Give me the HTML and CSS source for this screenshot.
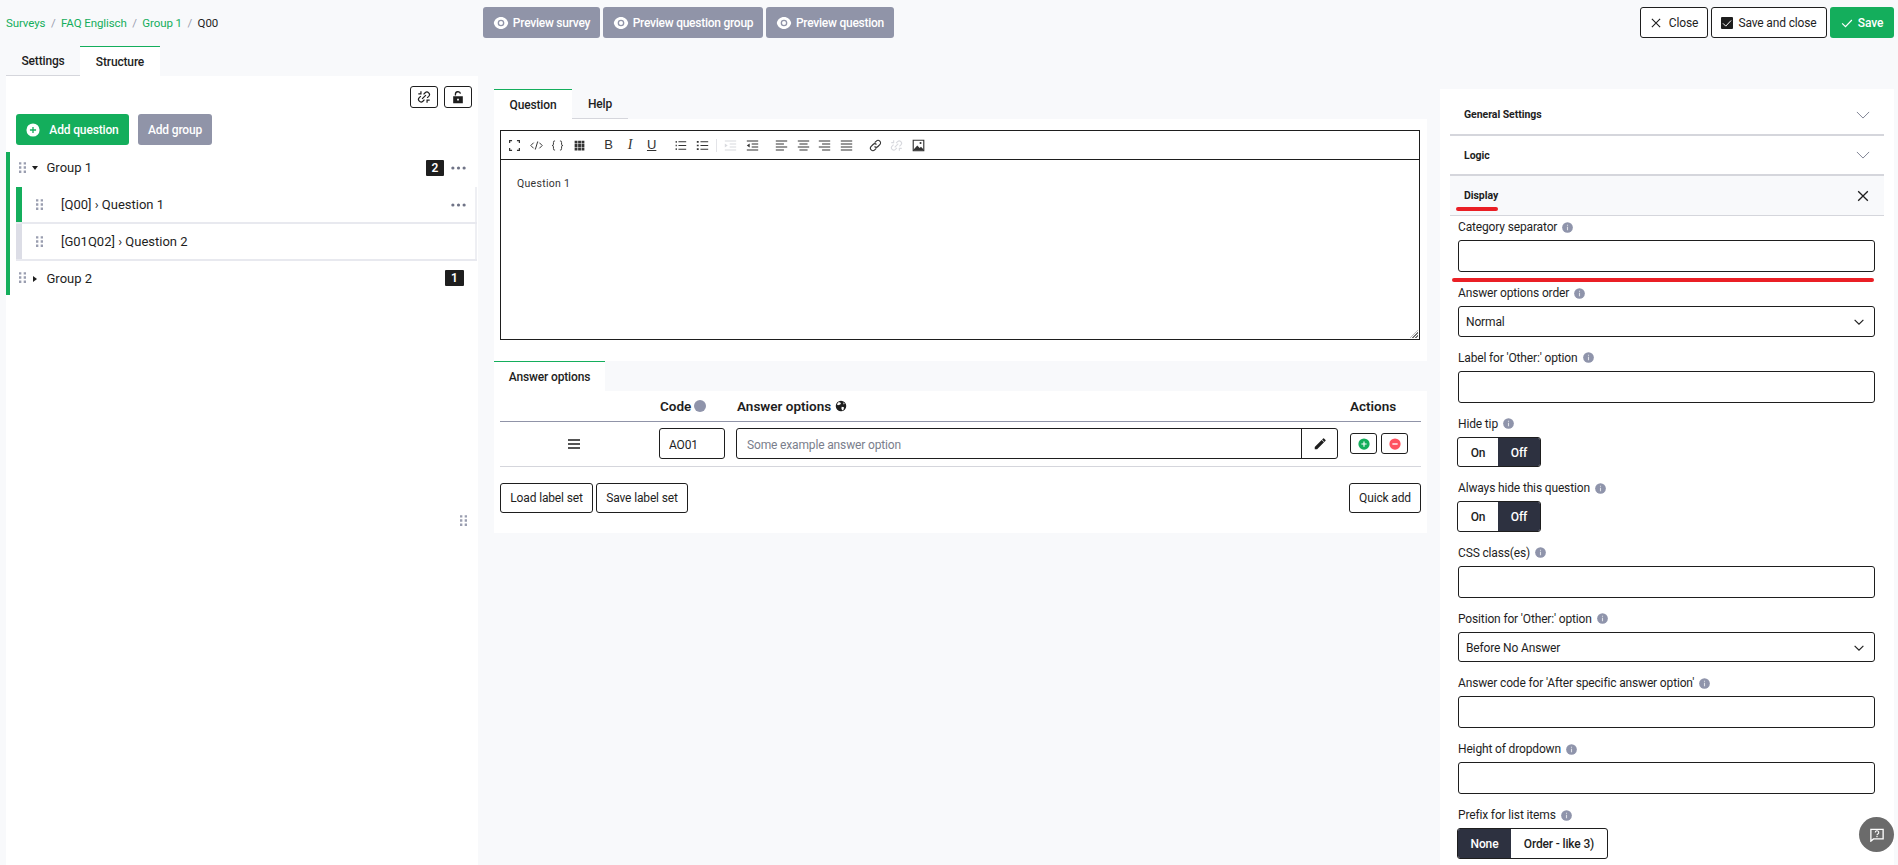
FILE: index.html
```html
<!DOCTYPE html>
<html lang="en">
<head>
<meta charset="utf-8">
<title>Q00</title>
<link rel="stylesheet" href="styles.css">
</head>
<body>
<svg class="defs" aria-hidden="true">
  <symbol id="eye" viewBox="0 0 24 24"><path fill="currentColor" fill-rule="evenodd" d="M1.2 12C2.1 6.9 6.6 3 12 3s9.9 3.9 10.8 9c-.9 5.100-5.400 9-10.800 9S2.100 17.100 1.200 12zM12 17a5 5 0 1 0 0-10 5 5 0 0 0 0 10zm0-2a3 3 0 1 1 0-6 3 3 0 0 1 0 6z"/></symbol>
  <symbol id="x" viewBox="0 0 16 16"><path d="M2.500 2.500l11 11M13.500 2.500l-11 11" fill="none" stroke="currentColor" stroke-width="1.500"/></symbol>
  <symbol id="check" viewBox="0 0 16 16"><path d="M1.500 8.500l4.500 4.500 8.500-9" fill="none" stroke="currentColor" stroke-width="1.600"/></symbol>
  <symbol id="chev" viewBox="0 0 16 16"><path d="M3 5.500l5 5 5-5" fill="none" stroke="currentColor" stroke-width="1.300"/></symbol>
  <symbol id="chev-thin" viewBox="0 0 16 16"><path d="M1 4.500l7 7 7-7" fill="none" stroke="currentColor" stroke-width="1"/></symbol>
  <symbol id="handle" viewBox="0 0 8 12"><path fill="currentColor" d="M0 0h2.500v2.500H0zM5 0h2.500v2.500H5zM0 4.500h2.500V7H0zM5 4.500h2.500V7H5zM0 9h2.500v2.500H0zM5 9h2.500v2.500H5z"/></symbol>
  <symbol id="more" viewBox="0 0 16 4"><circle cx="2" cy="2" r="1.700" fill="currentColor"/><circle cx="8" cy="2" r="1.700" fill="currentColor"/><circle cx="14" cy="2" r="1.700" fill="currentColor"/></symbol>
  <symbol id="plus-c" viewBox="0 0 16 16"><circle cx="8" cy="8" r="7.500" fill="currentColor"/><path d="M8 4.500v7M4.500 8h7" stroke="var(--hole)" stroke-width="1.500"/></symbol>
  <symbol id="minus-c" viewBox="0 0 16 16"><circle cx="8" cy="8" r="7.500" fill="currentColor"/><path d="M4.500 8h7" stroke="#fff" stroke-width="1.800"/></symbol>
  <symbol id="info" viewBox="0 0 16 16"><circle cx="8" cy="8" r="7.800" fill="#8f94ab"/><path d="M7.200 7h1.600v5H7.200zM7.200 4h1.600v1.600H7.200z" fill="#dfe1e8"/></symbol>
  <symbol id="unlink" viewBox="0 0 16 16"><path d="M7.500 5L9.300 3.200a2.900 2.900 0 0 1 4.100 4.100L11.600 9M8.500 11L6.700 12.800a2.900 2.900 0 0 1-4.100-4.100L4.400 7M5.800 10.200l4.400-4.400M1.500 4.500h3V1.500M14.500 11.500h-3v3" fill="none" stroke="currentColor" stroke-width="1.400"/></symbol>
  <symbol id="lock" viewBox="0 0 16 16"><path fill="currentColor" fill-rule="evenodd" d="M2.500 7h11v8h-11zM7 10v2h2v-2zM4.300 6.200V5a3.700 3.700 0 0 1 7.300-1l-1.500.4A2.200 2.200 0 0 0 5.800 5v1.200z"/></symbol>
  <symbol id="full" viewBox="0 0 16 16"><path d="M2 5V2h3M11 2h3v3M14 11v3h-3M5 14H2v-3" fill="none" stroke="currentColor" stroke-width="1.500"/></symbol>
  <symbol id="code" viewBox="0 0 16 16"><path d="M4.500 4.500L1 8l3.500 3.500M11.500 4.500L15 8l-3.500 3.500M9.500 3L6.500 13" fill="none" stroke="currentColor" stroke-width="1.200"/></symbol>
  <symbol id="braces" viewBox="0 0 16 16"><path d="M5 2.500H4C3 2.500 3 3.500 3 4.500V6.500C3 7.500 2.500 8 1.500 8C2.500 8 3 8.500 3 9.500V11.500C3 12.500 3 13.500 4 13.500H5M11 2.500H12C13 2.500 13 3.500 13 4.500V6.500C13 7.500 13.500 8 14.500 8C13.500 8 13 8.500 13 9.500V11.500C13 12.500 13 13.500 12 13.500H11" fill="none" stroke="currentColor" stroke-width="1.200"/></symbol>
  <symbol id="grid" viewBox="0 0 16 16"><path fill="currentColor" d="M2 2h3.500v3.500H2zM6.300 2h3.500v3.500H6.300zM10.500 2H14v3.500h-3.500zM2 6.300h3.500v3.500H2zM6.300 6.300h3.500v3.500H6.300zM10.500 6.300H14v3.500h-3.500zM2 10.500h3.500V14H2zM6.300 10.500h3.500V14H6.300zM10.500 10.500H14V14h-3.500z"/></symbol>
  <symbol id="ol" viewBox="0 0 16 16"><path d="M5.500 3.500h9.500M5.500 8h9.500M5.500 12.500h9.500" stroke="currentColor" stroke-width="1.300"/><path d="M2 2.500h1.500v2H2zM2 7h1.500v2H2zM2 11.500h1.500v2H2z" fill="currentColor"/></symbol>
  <symbol id="ul" viewBox="0 0 16 16"><path d="M5.500 3.500h9.500M5.500 8h9.500M5.500 12.500h9.500" stroke="currentColor" stroke-width="1.300"/><path d="M1 2.500h2.300v2H1zM1 7h2.300v2H1zM1 11.500h2.300v2H1z" fill="currentColor"/></symbol>
  <symbol id="ind" viewBox="0 0 16 16"><path d="M1 2.500h14M7 6.200h8M7 9.800h8M1 13.500h14" stroke="currentColor" stroke-width="1.300"/><path d="M1 5.500L4.500 8 1 10.500z" fill="currentColor"/></symbol>
  <symbol id="out" viewBox="0 0 16 16"><path d="M1 2.500h14M7 6.200h8M7 9.800h8M1 13.500h14" stroke="currentColor" stroke-width="1.300"/><path d="M4.500 5.500L1 8l3.500 2.500z" fill="currentColor"/></symbol>
  <symbol id="al" viewBox="0 0 16 16"><path d="M1 2.500h14M1 6.200h10M1 9.800h14M1 13.500h10" stroke="currentColor" stroke-width="1.300"/></symbol>
  <symbol id="ac" viewBox="0 0 16 16"><path d="M1 2.500h14M3 6.200h10M1 9.800h14M3 13.500h10" stroke="currentColor" stroke-width="1.300"/></symbol>
  <symbol id="ar" viewBox="0 0 16 16"><path d="M1 2.500h14M5 6.200h10M1 9.800h14M5 13.500h10" stroke="currentColor" stroke-width="1.300"/></symbol>
  <symbol id="aj" viewBox="0 0 16 16"><path d="M1 2.500h14M1 6.200h14M1 9.800h14M1 13.500h14" stroke="currentColor" stroke-width="1.300"/></symbol>
  <symbol id="link" viewBox="0 0 16 16"><path d="M7 4.500L9 2.600a3 3 0 0 1 4.300 4.300L11 9.200a3 3 0 0 1-4.200 0M9 11.500L7 13.400a3 3 0 0 1-4.300-4.300L5 6.800a3 3 0 0 1 4.200 0" fill="none" stroke="currentColor" stroke-width="1.400"/></symbol>
  <symbol id="img" viewBox="0 0 16 16"><path d="M1.500 1.500h13v13h-13z" fill="none" stroke="currentColor" stroke-width="1.400"/><path d="M2 13l4.500-5 3 3 1.500-1.500 3 3v1.500H2z" fill="currentColor"/><circle cx="10.500" cy="5" r="1.300" fill="currentColor"/></symbol>
  <symbol id="pencil" viewBox="0 0 16 16"><path fill="currentColor" d="M2 11.300V14h2.700l7.900-7.900-2.700-2.700zM14.300 4.400a.7.7 0 0 0 0-1l-1.700-1.700a.7.7 0 0 0-1 0l-1.200 1.200 2.700 2.700z"/></symbol>
  <symbol id="globe" viewBox="0 0 16 16"><circle cx="8" cy="8" r="7" fill="currentColor"/><path d="M5 2.500l3 1.500-1 2-3 1-1.500-1.500zM9 9l3 .5-.5 3-2 1.500-1-3zM11 3l2 2-1.500 1z" fill="#fff"/></symbol>
  <symbol id="help" viewBox="0 0 16 16"><path d="M1 1.500h14v11H4L1 15z" fill="none" stroke="currentColor" stroke-width="1.500"/><path d="M6 5.200a2 2 0 1 1 3 1.700c-.7.400-1 .7-1 1.400" fill="none" stroke="currentColor" stroke-width="1.300"/><path d="M7.300 9.200h1.400v1.400H7.300z" fill="currentColor"/></symbol>
</svg>

<header class="topbar">
  <nav class="crumbs">
    <a>Surveys</a><span class="sep">/</span><a>FAQ Englisch</a><span class="sep">/</span><a>Group 1</a><span class="sep">/</span><span>Q00</span>
  </nav>
  <div class="btn-row previews">
    <button class="btn grey"><svg class="i16"><use href="#eye"/></svg>Preview survey</button>
    <button class="btn grey"><svg class="i16"><use href="#eye"/></svg>Preview question group</button>
    <button class="btn grey"><svg class="i16"><use href="#eye"/></svg>Preview question</button>
  </div>
  <div class="btn-row actions">
    <button class="btn outline b-close"><svg class="i12"><use href="#x"/></svg>Close</button>
    <button class="btn outline b-saveclose"><span class="checkbox"><svg class="i10"><use href="#check"/></svg></span>Save and close</button>
    <button class="btn green b-save"><svg class="i12"><use href="#check"/></svg>Save</button>
  </div>
</header>

<main class="columns">
  <section class="col-left">
    <div class="tabs">
      <div class="tab tab-settings">Settings</div>
      <div class="tab active tab-structure">Structure</div>
    </div>
    <div class="tree-panel">
      <div class="tree-tools">
        <button class="tool"><svg class="i14"><use href="#unlink"/></svg></button>
        <button class="tool"><svg class="i14"><use href="#lock"/></svg></button>
      </div>
      <div class="add-row">
        <button class="btn green b-addq"><svg class="plus-ico"><use href="#plus-c"/></svg>Add question</button>
        <button class="btn grey b-addg">Add group</button>
      </div>
      <div class="tree">
        <div class="group first">
          <svg class="handle"><use href="#handle"/></svg>
          <span class="caret caret-down"></span>
          <span class="g-name">Group 1</span>
          <span class="badge">2</span>
          <svg class="more"><use href="#more"/></svg>
        </div>
        <div class="q current">
          <svg class="handle"><use href="#handle"/></svg>
          <span class="q-name">[Q00] › Question 1</span>
          <svg class="more"><use href="#more"/></svg>
        </div>
        <div class="q">
          <svg class="handle"><use href="#handle"/></svg>
          <span class="q-name">[G01Q02] › Question 2</span>
        </div>
        <div class="group">
          <svg class="handle"><use href="#handle"/></svg>
          <span class="caret caret-right"></span>
          <span class="g-name">Group 2</span>
          <span class="badge wide">1</span>
        </div>
      </div>
      <svg class="resizer"><use href="#handle"/></svg>
    </div>
  </section>

  <section class="col-center">
    <div class="tabs">
      <div class="tab active tab-q">Question</div>
      <div class="tab tab-h">Help</div>
    </div>
    <div class="editor-panel">
      <div class="editor">
        <div class="toolbar">
          <svg class="tb"><use href="#full"/></svg>
          <svg class="tb"><use href="#code"/></svg>
          <svg class="tb"><use href="#braces"/></svg>
          <svg class="tb"><use href="#grid"/></svg>
          <span class="tb-text gap-l">B</span>
          <span class="tb-text it">I</span>
          <span class="tb-text un">U</span>
          <svg class="tb gap-l"><use href="#ol"/></svg>
          <svg class="tb"><use href="#ul"/></svg>
          <span class="tb-sep"></span>
          <svg class="tb off"><use href="#ind"/></svg>
          <svg class="tb"><use href="#out"/></svg>
          <svg class="tb gap-l"><use href="#al"/></svg>
          <svg class="tb"><use href="#ac"/></svg>
          <svg class="tb"><use href="#ar"/></svg>
          <svg class="tb"><use href="#aj"/></svg>
          <svg class="tb gap-l"><use href="#link"/></svg>
          <svg class="tb off"><use href="#unlink"/></svg>
          <svg class="tb"><use href="#img"/></svg>
        </div>
        <div class="editor-body">Question 1<span class="grip"></span></div>
      </div>
    </div>
    <div class="tabs answers-tabs">
      <div class="tab active tab-a">Answer options</div>
    </div>
    <div class="answers">
      <div class="a-head">
        <span class="col-code">Code <span class="dot"></span></span>
        <span class="col-text">Answer options <svg class="i12"><use href="#globe"/></svg></span>
        <span class="col-act">Actions</span>
      </div>
      <div class="a-row">
        <span class="burger"></span>
        <input class="in in-code" value="AO01">
        <div class="in-group">
          <input class="in-plain" placeholder="Some example answer option">
          <span class="pen"><svg class="i14"><use href="#pencil"/></svg></span>
        </div>
        <div class="a-acts">
          <button class="mini"><svg class="i12 plus-g"><use href="#plus-c"/></svg></button>
          <button class="mini"><svg class="i12 minus-r"><use href="#minus-c"/></svg></button>
        </div>
      </div>
      <div class="a-foot">
        <button class="btn outline b-load">Load label set</button>
        <button class="btn outline b-sl">Save label set</button>
        <button class="btn outline b-quick">Quick add</button>
      </div>
    </div>
  </section>

  <aside class="col-right">
    <div class="acc"><span>General Settings</span><svg class="acc-ico thin"><use href="#chev-thin"/></svg></div>
    <div class="acc"><span>Logic</span><svg class="acc-ico thin"><use href="#chev-thin"/></svg></div>
    <div class="acc open"><span class="mark">Display</span><svg class="acc-ico"><use href="#x"/></svg></div>
    <div class="fields">
      <div class="field redline"><label>Category separator <svg class="info"><use href="#info"/></svg></label><input class="in"></div>
      <div class="field"><label>Answer options order <svg class="info"><use href="#info"/></svg></label><div class="select"><span>Normal</span><svg class="i14"><use href="#chev"/></svg></div></div>
      <div class="field"><label>Label for 'Other:' option <svg class="info"><use href="#info"/></svg></label><input class="in"></div>
      <div class="field"><label>Hide tip <svg class="info"><use href="#info"/></svg></label><div class="toggle"><span class="t-on">On</span><span class="t-off sel">Off</span></div></div>
      <div class="field"><label>Always hide this question <svg class="info"><use href="#info"/></svg></label><div class="toggle"><span class="t-on">On</span><span class="t-off sel">Off</span></div></div>
      <div class="field"><label>CSS class(es) <svg class="info"><use href="#info"/></svg></label><input class="in"></div>
      <div class="field"><label>Position for 'Other:' option <svg class="info"><use href="#info"/></svg></label><div class="select"><span>Before No Answer</span><svg class="i14"><use href="#chev"/></svg></div></div>
      <div class="field"><label>Answer code for 'After specific answer option' <svg class="info"><use href="#info"/></svg></label><input class="in"></div>
      <div class="field"><label>Height of dropdown <svg class="info"><use href="#info"/></svg></label><input class="in"></div>
      <div class="field"><label>Prefix for list items <svg class="info"><use href="#info"/></svg></label><div class="toggle"><span class="t-none sel">None</span><span class="t-order">Order - like 3)</span></div></div>
    </div>
  </aside>
</main>
<button class="help-fab"><svg class="i14"><use href="#help"/></svg></button>
</body>
</html>
```

FILE: styles.css
```css
* { box-sizing: border-box; }
html, body { height: 865px; overflow: hidden; }
html { margin: 0; }
body {
  margin: 0;
  padding-top: 7px;
  background: #f8f9fb;
  color: #1e1e1e;
  font-family: Roboto, "Liberation Sans", sans-serif;
  font-size: 12px;
  letter-spacing: -.15px;
  position: relative;
}
.defs { position: absolute; width: 0; height: 0; }
button, input { font: inherit; color: inherit; letter-spacing: inherit; }

.i10 { width: 10px; height: 10px; }
.i12 { width: 12px; height: 12px; }
.i14 { width: 14px; height: 14px; }
.i16 { width: 16px; height: 16px; }

.topbar { display: flex; align-items: center; height: 31px; padding-right: 4px; }
.crumbs { width: 483px; padding-left: 6px; display: flex; gap: 5.500px; font-size: 11.500px; letter-spacing: -.1px; }
.crumbs a { color: #14ae5c; }
.crumbs .sep { color: #9a9eb0; }
.btn-row { display: flex; gap: 3px; }
.actions { margin-left: auto; }

.btn {
  height: 31px;
  border: 1px solid transparent;
  border-radius: 3px;
  display: inline-flex;
  align-items: center;
  justify-content: center;
  gap: 5px;
  padding: 0;
  white-space: nowrap;
}
.grey { background: #9094a8; color: #fff; font-weight: 500; }
.green { background: #14ae5c; color: #fff; font-weight: 500; }
.outline { background: #fff; border-color: #1e1e1e; }
.previews .btn { gap: 4px; letter-spacing: -.25px; }
.previews .btn:nth-child(1) { width: 117px; }
.previews .btn:nth-child(2) { width: 160px; }
.previews .btn:nth-child(3) { width: 128px; }
.b-close { width: 68px; gap: 7px; }
.b-saveclose { width: 116px; }
.b-save { width: 64px; }
.checkbox { width: 12px; height: 12px; background: #1e1e1e; color: #fff; border-radius: 1px; display: inline-flex; align-items: center; justify-content: center; }

.columns { display: flex; padding: 8px 4px 0 6px; }
.col-left { width: 472px; flex: none; }
.col-center { width: 933px; flex: none; margin-left: 16px; padding-top: 43px; }
.col-right { width: 454px; flex: none; margin-left: 13px; margin-top: 43px; background: #fff; padding: 6px 10px 0; height: 776px; }

.tabs { display: flex; height: 30px; }
.tab { display: flex; align-items: center; justify-content: center; border-bottom: 1px solid #d5d6dc; font-weight: 500; }
.tab.active { background: #fff; border-top: 1px solid #14ae5c; border-bottom: 0; }
.tab-settings { width: 74px; }
.tab-structure { width: 80px; }
.tab-q { width: 78px; }
.tab-h { width: 56px; }
.tab-a { width: 111px; }

.tree-panel { background: #fff; height: 789px; position: relative; padding: 10px 0 0; }
.tree-tools { display: flex; justify-content: flex-end; gap: 6px; padding-right: 6px; }
.tool { width: 28px; height: 22px; background: #fff; border: 1px solid #1e1e1e; border-radius: 3px; padding: 0; display: flex; align-items: center; justify-content: center; }
.add-row { display: flex; gap: 9px; margin: 6px 0 7px 10px; }
.b-addq { width: 113px; gap: 9px; }
.plus-ico { width: 14px; height: 14px; color: #fff; --hole: #14ae5c; }
.b-addg { width: 74px; }
.tree { border-left: 4px solid #14ae5c; width: 472px; }
.group { height: 34px; display: flex; align-items: center; padding-left: 9px; font-size: 13px; letter-spacing: 0; }
.group.first { height: 33px; margin-bottom: 2px; padding-bottom: 2px; }
.handle { width: 7.500px; height: 11.500px; color: #9a9eb0; flex: none; }
.caret { width: 0; height: 0; flex: none; border-style: solid; border-color: transparent; }
.caret-down { border-width: 4px 3px 0; border-top-color: #1e1e1e; margin: 0 0 0 5px; }
.caret-right { border-width: 3px 0 3px 4px; border-left-color: #1e1e1e; margin: 2px 0 0 6px; }
.g-name { margin-left: 9px; }
.caret-right + .g-name { margin-left: 10px; }
.badge { background: #1e1e1e; color: #fff; font-size: 12px; font-weight: 600; width: 18px; height: 16px; border-radius: 1px; display: flex; align-items: center; justify-content: center; margin-left: auto; margin-right: 7px; }
.badge.wide { width: 19px; margin-right: 14px; }
.more { width: 15px; height: 4px; color: #6f7386; flex: none; margin-right: 12px; }
.q { height: 35px; margin: 0 1px 2px 6px; background: #fff; border-left: 6px solid #dcdde6; border-right: 2px solid #eeeff3; box-shadow: 0 2px 0 #e8e9ef; display: flex; align-items: center; padding-left: 14px; font-size: 13px; letter-spacing: 0; }
.q.current { border-left-color: #14ae5c; }
.q-name { margin-left: 17.500px; margin-right: auto; }
.q .more { margin-right: 9px; }
.resizer { position: absolute; left: 454px; top: 439px; width: 7.500px; height: 11.500px; color: #9a9eb0; }

.editor-panel { background: #fff; height: 242px; padding: 11px 7px 0 6px; }
.editor { border: 1px solid #1e1e1e; height: 210px; display: flex; flex-direction: column; }
.toolbar { height: 29px; border-bottom: 1px solid #1e1e1e; display: flex; align-items: center; padding-left: 7px; gap: 8.600px; flex: none; color: #333; }
.tb { width: 13px; height: 13px; flex: none; }
.tb.off { color: #d8d9de; }
.gap-l { margin-left: 7.600px; }
.tb-text { width: 13px; text-align: center; font-size: 13px; line-height: 14px; font-family: "Liberation Sans", sans-serif; letter-spacing: 0; flex: none; }
.it { font-style: italic; font-family: "Liberation Serif", serif; font-size: 14px; }
.un { text-decoration: underline; }
.tb-sep { width: 1px; height: 13px; background: #e3e4e8; margin: 0 -1.500px; flex: none; }
.editor-body { flex: 1; padding: 17px 16px; font-size: 10.500px; letter-spacing: .3px; color: #333; position: relative; }
.grip { position: absolute; right: 1px; bottom: 1px; width: 8px; height: 8px; background: repeating-linear-gradient(135deg, #fff 0 1px, #777 1px 2px); clip-path: polygon(100% 0, 100% 100%, 0 100%); }

.answers { background: #fff; height: 142px; padding: 0 6px; }
.a-head { height: 31px; border-bottom: 1px solid #9094a8; display: flex; align-items: center; font-size: 13.500px; font-weight: 600; letter-spacing: 0; }
.col-code { margin-left: 160px; width: 77px; display: flex; align-items: center; gap: 3px; }
.dot { width: 12px; height: 12px; border-radius: 50%; background: #8f94ab; display: inline-block; }
.col-text { flex: 1; display: flex; align-items: center; gap: 4px; }
.col-act { width: 71px; }
.a-row { height: 45px; border-bottom: 1px solid #d5d6dc; display: flex; align-items: center; padding-bottom: 1px; }
.burger { width: 12px; height: 10px; margin-left: 68px; border-top: 2px solid #555; border-bottom: 2px solid #555; position: relative; flex: none; }
.burger::after { content: ""; position: absolute; left: 0; right: 0; top: 2px; height: 2px; background: #555; }
.in { height: 32px; width: 100%; border: 1px solid #1e1e1e; border-radius: 3px; background: #fff; padding: 0 7px; display: block; outline: 0; }
.in-code { width: 66px; height: 31px; margin-left: 79px; flex: none; padding: 2px 9px 0; }
.in-group { width: 602px; height: 31px; margin-left: 11px; flex: none; border: 1px solid #1e1e1e; border-radius: 3px; display: flex; }
.in-plain { flex: 1; min-width: 0; border: 0; border-right: 1px solid #1e1e1e; padding: 2px 10px 0; outline: 0; background: transparent; border-radius: 3px 0 0 3px; }
.in-plain::placeholder { color: #7a7e8c; opacity: 1; }
.pen { width: 35px; display: flex; align-items: center; justify-content: center; }
.a-acts { display: flex; gap: 4px; margin-left: 12px; }
.mini { width: 27px; height: 21px; border: 1px solid #1e1e1e; border-radius: 3px; background: #fff; padding: 0; display: flex; align-items: center; justify-content: center; }
.plus-g { color: #14ae5c; --hole: #fff; }
.minus-r { color: #ff515f; }
.a-foot { display: flex; gap: 3px; margin-top: 16px; }
.a-foot .btn { height: 30px; }
.b-load { width: 93px; }
.b-sl { width: 92px; }
.b-quick { width: 72px; margin-left: auto; }

.acc { height: 41px; border-bottom: 2px solid #d5d6dc; display: flex; align-items: center; justify-content: space-between; padding: 0 14px; font-size: 10.500px; font-weight: 700; letter-spacing: -.05px; }
.acc + .acc { height: 40px; }
.acc.open { height: 40px; background: #f8f9fb; border-bottom: 1px solid #d5d6dc; position: relative; }
.mark { position: relative; }
.mark::after { content: ""; position: absolute; left: -8px; width: 42px; bottom: -9px; height: 4px; border-radius: 2px; background: #ea1f25; }
.acc-ico { width: 14px; height: 14px; color: #1e1e1e; }
.acc-ico.thin { color: #6f7386; }
.fields { padding: 0 9px 0 8px; }
.field { margin-bottom: 10px; position: relative; }
.field label { height: 20px; display: flex; align-items: center; gap: 5px; margin-bottom: 4px; padding-top: 2px; }
.info { width: 11px; height: 11px; flex: none; }
.select { height: 30.500px; border: 1px solid #1e1e1e; border-radius: 3px; display: flex; align-items: center; justify-content: space-between; padding: 2px 8px 0 7px; }
.toggle { display: flex; width: max-content; height: 30.500px; margin-left: -1px; border: 1px solid #1e1e1e; border-radius: 3px; overflow: hidden; font-weight: 500; }
.toggle span { display: flex; align-items: center; justify-content: center; padding-top: 2px; }
.sel { background: #2d3140; color: #fff; }
.t-on { width: 40px; }
.t-off { width: 42px; }
.t-none { width: 53px; }
.t-order { width: 96px; }
.redline::after { content: ""; position: absolute; left: -6px; width: 422px; bottom: -10px; height: 4px; border-radius: 2px; background: #ea1f25; }
.help-fab { position: absolute; left: 1859px; top: 817px; width: 35px; height: 35px; border-radius: 50%; border: 0; background: #6b6b6b; color: #fff; padding: 0; display: flex; align-items: center; justify-content: center; }
```
